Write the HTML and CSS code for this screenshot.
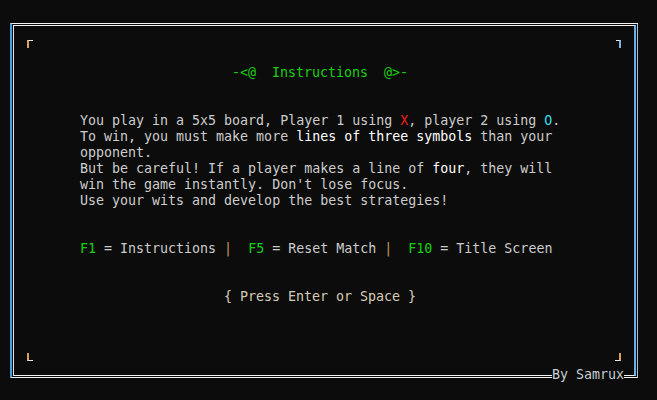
FILE: index.html
```html
<!DOCTYPE html>
<html lang="en">
<head>
<meta charset="utf-8">
<title>Instructions</title>
<link rel="stylesheet" href="styles.css">
</head>
<body>
<div class="frame">
  <div class="inner">
    <div class="corners"><span class="c tl"></span><span class="c tr"></span></div>
    <div class="content">
      <p class="title">-&lt;@  Instructions  @&gt;-</p>
      <p class="para">You play in a 5x5 board, Player 1 using <span class="red">X</span>, player 2 using <span class="cyan">O</span>.
To win, you must make more <span class="hi">lines of three symbols</span> than your
opponent.
But be careful! If a player makes a line of <span class="hi">four</span>, they will
win the game instantly. Don't lose focus.
Use your wits and develop the best strategies!</p>
      <p class="keys"><span class="green">F1</span> = Instructions <span class="pipe">|</span>  <span class="green">F5</span> = Reset Match <span class="pipe">|</span>  <span class="green">F10</span> = Title Screen</p>
      <p class="press">{ Press Enter or Space }</p>
    </div>
    <div class="corners bottom"><span class="c bl"></span><span class="c br"></span></div>
  </div>
  <span class="credit">By Samrux</span>
</div>
</body>
</html>
```
FILE: styles.css
```css
html, body {
  margin: 0;
  padding: 0;
  background: #0c0c0c;
}
body {
  font-family: "DejaVu Sans Mono", "Liberation Mono", monospace;
  font-size: 13.3px;
  line-height: 16px;
  color: #cccccc;
  padding-top: 23px;
  padding-left: 10px;
  height: 400px;
  box-sizing: border-box;
}
.frame {
  position: relative;
  box-sizing: border-box;
  width: 628px;
  height: 355px;
  border-top: 1px solid #f2f2f2;
  border-bottom: 1px solid #f2f2f2;
  border-left: 2px solid #4a9fe0;
  border-right: 1px solid #9ec6ea;
  padding: 1px;
  display: flex;
}
.inner {
  flex: 1;
  box-sizing: border-box;
  border-top: 1px solid #f2f2f2;
  border-bottom: 1px solid #f2f2f2;
  border-left: 1px solid #d8e6f2;
  border-right: 2px solid #6aaee4;
  padding: 14px 13px 14px 13px;
  display: flex;
  flex-direction: column;
}
.corners {
  display: flex;
  justify-content: space-between;
  height: 8px;
}
.corners.bottom {
  margin-top: auto;
}
.c {
  display: block;
  box-sizing: border-box;
  height: 8px;
  border-color: #e6e6e6;
  border-style: solid;
  border-width: 0;
}
.tl { width: 6px; border-top-width: 1px; border-left-width: 2px; border-left-color: #d9a060; }
.tr { width: 5px; border-top-width: 1px; border-right-width: 2px; border-right-color: #7ab4e4; }
.bl { width: 6px; border-bottom-width: 1px; border-left-width: 2px; border-left-color: #d9a060; }
.br { width: 6px; border-bottom-width: 1px; border-right-width: 2px; border-right-color: #d9a060; }
.content {
  margin-top: 17px;
  margin-left: 53px;
}
.content p {
  margin: 0;
  white-space: pre;
}
.title {
  margin-left: 152px !important;
  color: #19d011;
}
.para {
  margin-top: 32px !important;
}
.keys {
  margin-top: 32px !important;
}
.press {
  margin-top: 32px !important;
  margin-left: 144px !important;
  color: #d6ccb6;
}
.hi { color: #ffffff; }
.red { color: #f01c1c; }
.cyan { color: #3ad8e4; }
.green { color: #19d011; }
.pipe { color: #c8955a; }
.credit {
  position: absolute;
  z-index: 2;
  left: 540px;
  top: 343px;
  height: 16px;
  line-height: 16px;
  white-space: pre;
  background: #0c0c0c;
  color: #c4ccd4;
}
```
